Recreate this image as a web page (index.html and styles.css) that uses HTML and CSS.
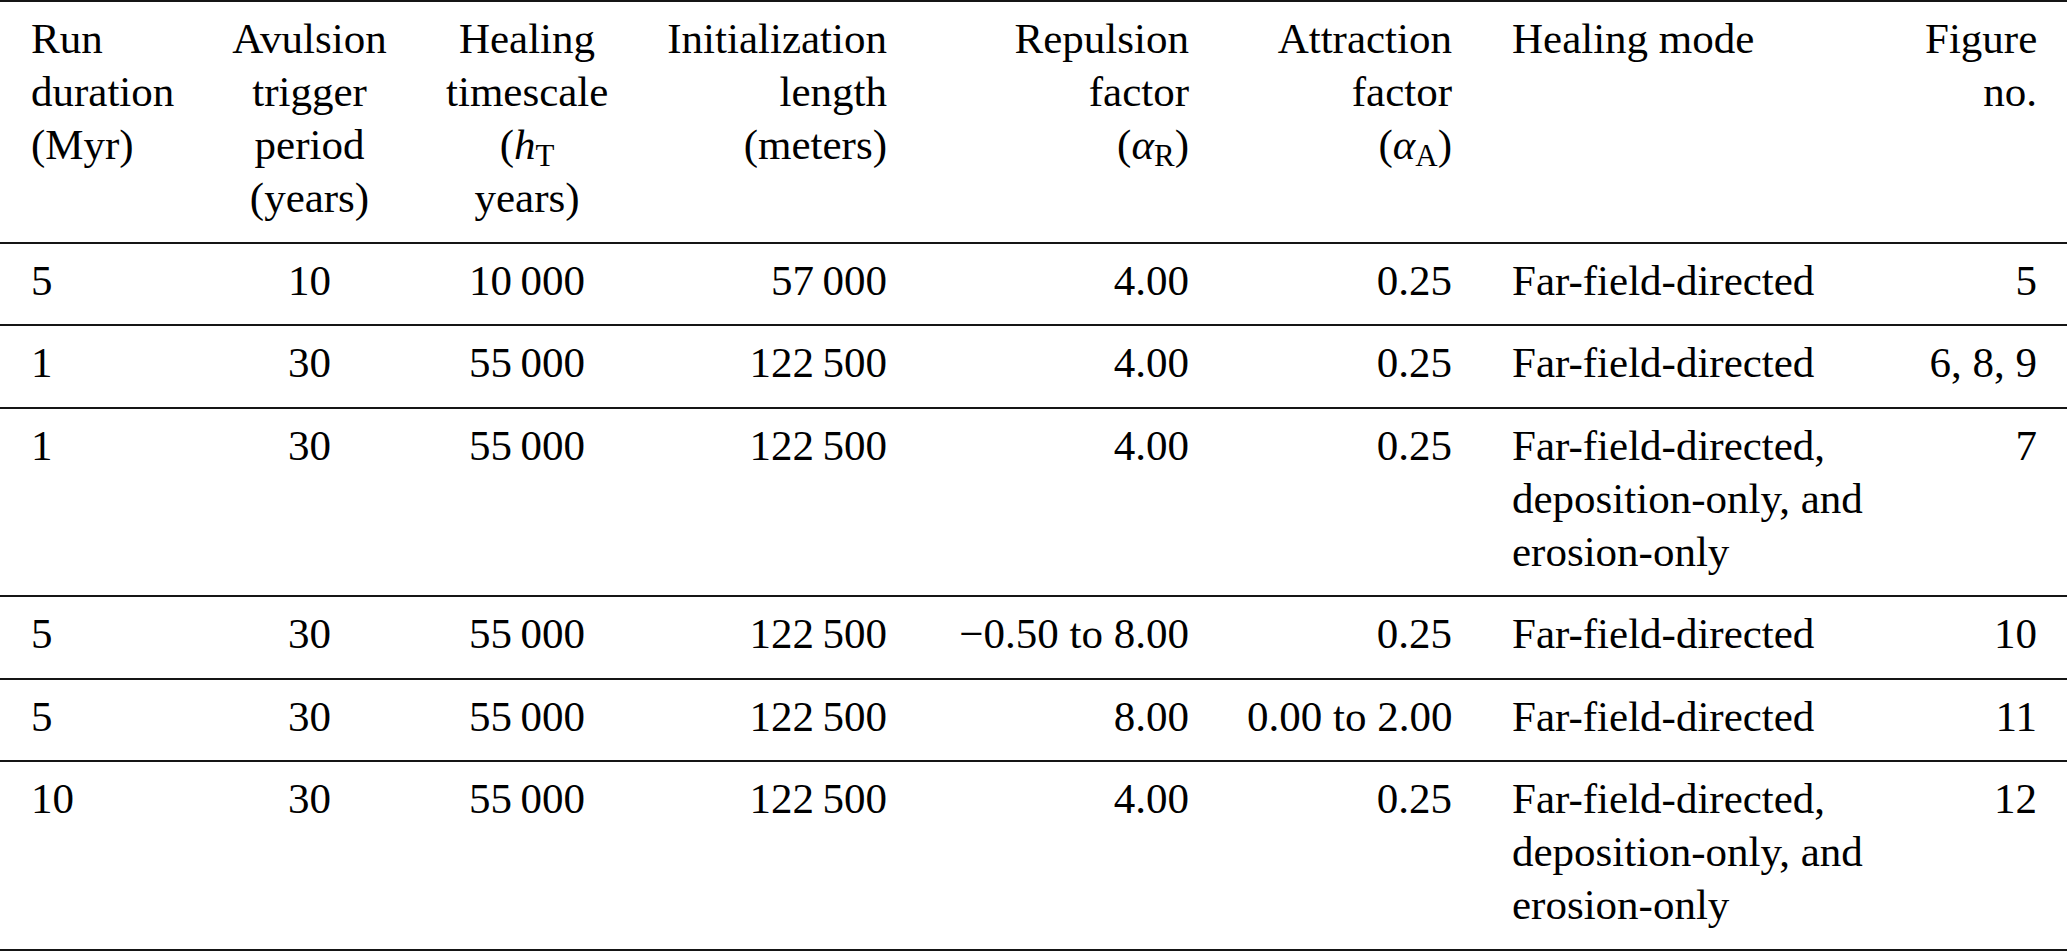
FILE: index.html
```html
<!DOCTYPE html>
<html lang="en">
<head>
<meta charset="utf-8">
<title>Model runs</title>
<link rel="stylesheet" href="styles.css">
</head>
<body>
<table class="runs">
  <colgroup>
    <col class="w1"><col class="w2"><col class="w3"><col class="w4"><col class="w5"><col class="w6"><col class="w7"><col class="w8">
  </colgroup>
  <thead>
    <tr>
      <th class="c1">Run<br>duration<br>(Myr)</th>
      <th class="c2">Avulsion<br>trigger<br>period<br>(years)</th>
      <th class="c3">Healing<br>timescale<br>(<i>h</i><span class="sub">T</span><br>years)</th>
      <th class="c4">Initialization<br>length<br>(meters)</th>
      <th class="c5">Repulsion<br>factor<br>(<i>α</i><span class="sub">R</span>)</th>
      <th class="c6">Attraction<br>factor<br>(<i>α</i><span class="sub">A</span>)</th>
      <th class="c7">Healing mode</th>
      <th class="c8">Figure<br>no.</th>
    </tr>
  </thead>
  <tbody>
    <tr>
      <td class="c1">5</td><td class="c2">10</td><td class="c3">10&thinsp;000</td><td class="c4">57&thinsp;000</td>
      <td class="c5">4.00</td><td class="c6">0.25</td><td class="c7">Far-field-directed</td><td class="c8">5</td>
    </tr>
    <tr>
      <td class="c1">1</td><td class="c2">30</td><td class="c3">55&thinsp;000</td><td class="c4">122&thinsp;500</td>
      <td class="c5">4.00</td><td class="c6">0.25</td><td class="c7">Far-field-directed</td><td class="c8">6, 8, 9</td>
    </tr>
    <tr>
      <td class="c1">1</td><td class="c2">30</td><td class="c3">55&thinsp;000</td><td class="c4">122&thinsp;500</td>
      <td class="c5">4.00</td><td class="c6">0.25</td><td class="c7">Far-field-directed,<br>deposition-only, and<br>erosion-only</td><td class="c8">7</td>
    </tr>
    <tr>
      <td class="c1">5</td><td class="c2">30</td><td class="c3">55&thinsp;000</td><td class="c4">122&thinsp;500</td>
      <td class="c5">&minus;0.50 to 8.00</td><td class="c6">0.25</td><td class="c7">Far-field-directed</td><td class="c8">10</td>
    </tr>
    <tr>
      <td class="c1">5</td><td class="c2">30</td><td class="c3">55&thinsp;000</td><td class="c4">122&thinsp;500</td>
      <td class="c5">8.00</td><td class="c6">0.00 to 2.00</td><td class="c7">Far-field-directed</td><td class="c8">11</td>
    </tr>
    <tr>
      <td class="c1">10</td><td class="c2">30</td><td class="c3">55&thinsp;000</td><td class="c4">122&thinsp;500</td>
      <td class="c5">4.00</td><td class="c6">0.25</td><td class="c7">Far-field-directed,<br>deposition-only, and<br>erosion-only</td><td class="c8">12</td>
    </tr>
  </tbody>
</table>
</body>
</html>
```

FILE: styles.css
```css
html, body {
  margin: 0;
  padding: 0;
  background: #ffffff;
}

body {
  font-family: "Liberation Serif", "Times New Roman", serif;
  font-size: 43px;
  color: #000000;
}

.runs {
  width: 2067px;
  border-collapse: collapse;
  table-layout: fixed;
  border-top: 2px solid #151515;
}

.w1 { width: 202px; }
.w2 { width: 215px; }
.w3 { width: 220px; }
.w4 { width: 279px; }
.w5 { width: 302px; }
.w6 { width: 265px; }
.w7 { width: 413px; }
.w8 { width: 171px; }

.runs tr {
  border-bottom: 2px solid #151515;
}

.runs th,
.runs td {
  font-weight: normal;
  line-height: 53px;
  padding: 10px 29px 17.5px;
  vertical-align: top;
  white-space: nowrap;
}

.runs .c1 { text-align: left; padding-left: 31px; }
.runs .c2 { text-align: center; }
.runs .c3 { text-align: center; }
.runs .c4 { text-align: right; }
.runs .c5 { text-align: right; }
.runs .c6 { text-align: right; padding-right: 31px; }
.runs .c7 { text-align: left; }
.runs .c8 { text-align: right; padding-right: 30px; }

.sub {
  font-size: 0.72em;
  vertical-align: -0.22em;
  line-height: 0;
}
```
